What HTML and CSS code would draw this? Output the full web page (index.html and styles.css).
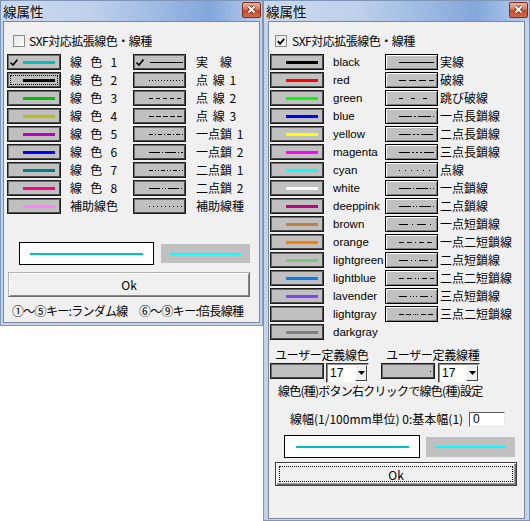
FILE: index.html
```html
<!DOCTYPE html>
<html lang="ja">
<head>
<meta charset="utf-8">
<title>線属性</title>
<link rel="stylesheet" href="styles.css">
</head>
<body>

<div class="win win-left">
  <div class="titlebar">
    <span class="title">線属性</span>
    <span class="close"><svg width="19" height="16" viewBox="0 0 19 16"><path d="M6.5 4.5 L12.5 10.5 M12.5 4.5 L6.5 10.5" class="x-out"/><path d="M6.5 4.5 L12.5 10.5 M12.5 4.5 L6.5 10.5" class="x-in"/></svg></span>
  </div>
  <div class="client">
    <div class="chkrow"><span class="chk"></span><span class="chktext">SXF対応拡張線色・線種</span></div>

    <div class="grid gl">
      <div class="cbtn"><svg class="tick" width="8" height="7" viewBox="0 0 8 7"><path d="M0.5 3.5 L3 6 L7.5 0.5"/></svg><span class="sw" style="background:#00c0c0"></span></div>
      <div class="lab">線 色 1</div>
      <div class="lbtn"><svg class="tick" width="8" height="7" viewBox="0 0 8 7"><path d="M0.5 3.5 L3 6 L7.5 0.5"/></svg><svg class="ln" width="33" height="3"><line x1="0" y1="1.5" x2="33" y2="1.5"/></svg></div>
      <div class="lab2">実　線</div>

      <div class="cbtn focus"><span class="sw" style="background:#000000"></span></div>
      <div class="lab">線 色 2</div>
      <div class="lbtn"><svg class="ln" width="34" height="3"><line x1="0" y1="1.5" x2="34" y2="1.5" stroke-dasharray="1 2"/></svg></div>
      <div class="lab2">点 線 1</div>

      <div class="cbtn"><span class="sw" style="background:#00c000"></span></div>
      <div class="lab">線 色 3</div>
      <div class="lbtn"><svg class="ln" width="34" height="3"><line x1="0" y1="1.5" x2="34" y2="1.5" stroke-dasharray="4 3"/></svg></div>
      <div class="lab2">点 線 2</div>

      <div class="cbtn"><span class="sw" style="background:#c0c000"></span></div>
      <div class="lab">線 色 4</div>
      <div class="lbtn"><svg class="ln" width="34" height="3"><line x1="0" y1="1.5" x2="34" y2="1.5" stroke-dasharray="5 2"/></svg></div>
      <div class="lab2">点 線 3</div>

      <div class="cbtn"><span class="sw" style="background:#c000c0"></span></div>
      <div class="lab">線 色 5</div>
      <div class="lbtn"><svg class="ln" width="34" height="3"><line x1="0" y1="1.5" x2="34" y2="1.5" stroke-dasharray="4 2 1 2"/></svg></div>
      <div class="lab2">一点鎖 1</div>

      <div class="cbtn"><span class="sw" style="background:#0000ff"></span></div>
      <div class="lab">線 色 6</div>
      <div class="lbtn"><svg class="ln" width="34" height="3"><line x1="0" y1="1.5" x2="34" y2="1.5" stroke-dasharray="11 2 1 2"/></svg></div>
      <div class="lab2">一点鎖 2</div>

      <div class="cbtn"><span class="sw" style="background:#008080"></span></div>
      <div class="lab">線 色 7</div>
      <div class="lbtn"><svg class="ln" width="34" height="3"><line x1="0" y1="1.5" x2="34" y2="1.5" stroke-dasharray="4 2 1 2 1 2"/></svg></div>
      <div class="lab2">二点鎖 1</div>

      <div class="cbtn"><span class="sw" style="background:#ff0080"></span></div>
      <div class="lab">線 色 8</div>
      <div class="lbtn"><svg class="ln" width="34" height="3"><line x1="0" y1="1.5" x2="34" y2="1.5" stroke-dasharray="11 2 1 2 1 2"/></svg></div>
      <div class="lab2">二点鎖 2</div>

      <div class="cbtn"><span class="sw" style="background:#ff80ff"></span></div>
      <div class="lab">補助線色</div>
      <div class="lbtn"><svg class="ln" width="34" height="3"><line x1="0" y1="1.5" x2="34" y2="1.5" stroke-dasharray="1 3"/></svg></div>
      <div class="lab2">補助線種</div>
    </div>

    <div class="preview pl">
      <div class="pv-white"><span class="pv-line dark"></span></div>
      <div class="pv-gray"><span class="pv-line bright"></span></div>
    </div>

    <div class="ok okl">Ok</div>
    <div class="hint">①～⑤キー:ランダム線　⑥～⑨キー:倍長線種</div>
  </div>
</div>

<div class="win win-right">
  <div class="titlebar">
    <span class="title">線属性</span>
    <span class="close"><svg width="19" height="16" viewBox="0 0 19 16"><path d="M6.5 4.5 L12.5 10.5 M12.5 4.5 L6.5 10.5" class="x-out"/><path d="M6.5 4.5 L12.5 10.5 M12.5 4.5 L6.5 10.5" class="x-in"/></svg></span>
  </div>
  <div class="client">
    <div class="chkrow rchk"><span class="chk"><svg width="11" height="11" viewBox="0 0 11 11"><path d="M2 5 L4.5 8 L9 2.5"/></svg></span><span class="chktext">SXF対応拡張線色・線種</span></div>

    <div class="grid gr">
      <div class="cbtn"><span class="sw" style="background:#000000"></span></div>
      <div class="en">black</div>
      <div class="rbtn"><svg class="ln" width="35" height="3"><line x1="0" y1="1.5" x2="35" y2="1.5"/></svg></div>
      <div class="lab3">実線</div>

      <div class="cbtn"><span class="sw" style="background:#ff0000"></span></div>
      <div class="en">red</div>
      <div class="rbtn"><svg class="ln" width="35" height="3"><line x1="0" y1="1.5" x2="35" y2="1.5" stroke-dasharray="7 3"/></svg></div>
      <div class="lab3">破線</div>

      <div class="cbtn"><span class="sw" style="background:#00ff00"></span></div>
      <div class="en">green</div>
      <div class="rbtn"><svg class="ln" width="35" height="3"><line x1="0" y1="1.5" x2="35" y2="1.5" stroke-dasharray="4 8"/></svg></div>
      <div class="lab3">跳び破線</div>

      <div class="cbtn"><span class="sw" style="background:#0000ff"></span></div>
      <div class="en">blue</div>
      <div class="rbtn"><svg class="ln" width="35" height="3"><line x1="0" y1="1.5" x2="35" y2="1.5" stroke-dasharray="13 2 2 2"/></svg></div>
      <div class="lab3">一点長鎖線</div>

      <div class="cbtn"><span class="sw" style="background:#ffff00"></span></div>
      <div class="en">yellow</div>
      <div class="rbtn"><svg class="ln" width="35" height="3"><line x1="0" y1="1.5" x2="35" y2="1.5" stroke-dasharray="12 2 2 2 2 2"/></svg></div>
      <div class="lab3">二点長鎖線</div>

      <div class="cbtn"><span class="sw" style="background:#ff00ff"></span></div>
      <div class="en">magenta</div>
      <div class="rbtn"><svg class="ln" width="35" height="3"><line x1="0" y1="1.5" x2="35" y2="1.5" stroke-dasharray="11 2 2 2 2 2 2 2"/></svg></div>
      <div class="lab3">三点長鎖線</div>

      <div class="cbtn"><span class="sw" style="background:#00ffff"></span></div>
      <div class="en">cyan</div>
      <div class="rbtn"><svg class="ln" width="35" height="3"><line x1="0" y1="1.5" x2="35" y2="1.5" stroke-dasharray="1 5"/></svg></div>
      <div class="lab3">点線</div>

      <div class="cbtn"><span class="sw" style="background:#ffffff"></span></div>
      <div class="en">white</div>
      <div class="rbtn"><svg class="ln" width="35" height="3"><line x1="0" y1="1.5" x2="35" y2="1.5" stroke-dasharray="12 2 1 2"/></svg></div>
      <div class="lab3">一点鎖線</div>

      <div class="cbtn"><span class="sw" style="background:#c00080"></span></div>
      <div class="en">deeppink</div>
      <div class="rbtn"><svg class="ln" width="35" height="3"><line x1="0" y1="1.5" x2="35" y2="1.5" stroke-dasharray="12 2 1 2 1 2"/></svg></div>
      <div class="lab3">二点鎖線</div>

      <div class="cbtn"><span class="sw" style="background:#c08040"></span></div>
      <div class="en">brown</div>
      <div class="rbtn"><svg class="ln" width="35" height="3"><line x1="0" y1="1.5" x2="35" y2="1.5" stroke-dasharray="9 4 1 4"/></svg></div>
      <div class="lab3">一点短鎖線</div>

      <div class="cbtn"><span class="sw" style="background:#ff8000"></span></div>
      <div class="en">orange</div>
      <div class="rbtn"><svg class="ln" width="35" height="3"><line x1="0" y1="1.5" x2="35" y2="1.5" stroke-dasharray="5 3 5 3 1 3"/></svg></div>
      <div class="lab3">一点二短鎖線</div>

      <div class="cbtn"><span class="sw" style="background:#80c080"></span></div>
      <div class="en">lightgreen</div>
      <div class="rbtn"><svg class="ln" width="35" height="3"><line x1="0" y1="1.5" x2="35" y2="1.5" stroke-dasharray="9 3 1 3 1 3"/></svg></div>
      <div class="lab3">二点短鎖線</div>

      <div class="cbtn"><span class="sw" style="background:#0080ff"></span></div>
      <div class="en">lightblue</div>
      <div class="rbtn"><svg class="ln" width="35" height="3"><line x1="0" y1="1.5" x2="35" y2="1.5" stroke-dasharray="5 3 5 3 1 2 1 3"/></svg></div>
      <div class="lab3">二点二短鎖線</div>

      <div class="cbtn"><span class="sw" style="background:#8040ff"></span></div>
      <div class="en">lavender</div>
      <div class="rbtn"><svg class="ln" width="35" height="3"><line x1="0" y1="1.5" x2="35" y2="1.5" stroke-dasharray="8 3 1 2 1 2 1 3"/></svg></div>
      <div class="lab3">三点短鎖線</div>

      <div class="cbtn"><span class="sw" style="background:#c0c0c0"></span></div>
      <div class="en">lightgray</div>
      <div class="rbtn"><svg class="ln" width="35" height="3"><line x1="0" y1="1.5" x2="35" y2="1.5" stroke-dasharray="5 2 5 2 1 1 1 1 1 3"/></svg></div>
      <div class="lab3">三点二短鎖線</div>

      <div class="cbtn"><span class="sw" style="background:#808080"></span></div>
      <div class="en">darkgray</div>
    </div>

    <div class="udef">
      <div class="ugroup">
        <div class="ulabel">ユーザー定義線色</div>
        <div class="urow">
          <div class="cbtn ubox"></div>
          <div class="combo c1"><span class="cval">17</span><span class="arrow"><svg width="7" height="4" viewBox="0 0 7 4"><path d="M0 0 H7 L3.5 4 Z"/></svg></span></div>
        </div>
      </div>
      <div class="ugroup">
        <div class="ulabel">ユーザー定義線種</div>
        <div class="urow">
          <div class="cbtn ubox dot"><span class="udot"></span></div>
          <div class="combo c2"><span class="cval">17</span><span class="arrow"><svg width="7" height="4" viewBox="0 0 7 4"><path d="M0 0 H7 L3.5 4 Z"/></svg></span></div>
        </div>
      </div>
    </div>

    <div class="note">線色(種)ボタン右クリックで線色(種)設定</div>

    <div class="widthrow">
      <span class="wlabel">線幅(1/100mm単位) 0:基本幅(1)</span>
      <span class="inp">0</span>
    </div>

    <div class="preview pr">
      <div class="pv-white"><span class="pv-line dark"></span></div>
      <div class="pv-gray"><span class="pv-line bright"></span></div>
    </div>

    <div class="ok okr">Ok</div>
  </div>
</div>

</body>
</html>
```

FILE: styles.css
```css
* { box-sizing: border-box; }
html, body { margin: 0; padding: 0; }
body {
  width: 530px;
  height: 521px;
  overflow: hidden;
  position: relative;
  background: #ffffff;
  font-family: "Noto Sans CJK JP", sans-serif;
  font-size: 12px;
  color: #000;
}

/* windows on the desktop */
.win {
  position: absolute;
  top: 0;
  display: flex;
  flex-direction: column;
  background: #c2d4ec;
  border: 1px solid #7f96b8;
}
.win-left { left: 0; width: 263px; height: 326px; padding: 0 2px 2px; }
.win-right { left: 263px; width: 267px; height: 521px; padding: 0 4px 1px; }

.titlebar {
  height: 20px;
  margin: 0 -2px;
  display: flex;
  justify-content: space-between;
  align-items: flex-start;
  padding: 1px 1px 0 2px;
  background: linear-gradient(90deg, #c8d8ee 0%, #bed0eb 35%, #9bb8e2 62%, #84a6da 80%, #a4bee6 92%, #b9cdeb 100%);
}
.win-right .titlebar { margin: 0 -4px; }
.title {
  font-size: 13.5px;
  line-height: 18px;
  color: #000;
  text-shadow: 0 0 3px rgba(255,255,255,0.8);
}
.close {
  width: 19px;
  height: 16px;
  border: 1px solid #7a2c1e;
  border-radius: 2px;
  background: linear-gradient(180deg, #eab2a0 0%, #d98366 40%, #c54b2b 55%, #d36a4d 100%);
  display: flex;
}
.close svg { display: block; margin: -1px; }
.x-out { stroke: #5e2012; stroke-width: 3.6; fill: none; }
.x-in { stroke: #ffffff; stroke-width: 2; fill: none; }

.client {
  flex: 1;
  background: #f0f0f0;
  border: 1px solid #7d8894;
  display: flex;
  flex-direction: column;
  align-items: flex-start;
}

/* checkbox row */
.chkrow {
  display: flex;
  align-items: center;
  gap: 4px;
  margin: 13px 0 0 9px;
  height: 12px;
}
.rchk { margin-left: 6px; gap: 5px; }
.chk {
  width: 12px;
  height: 12px;
  border: 1px solid #8a8a8a;
  background: linear-gradient(135deg, #e4e4e4, #ffffff);
  display: flex;
  align-items: center;
  justify-content: center;
}
.chk svg path { fill: none; stroke: #000; stroke-width: 2; }
.chktext { line-height: 14px; letter-spacing: -0.5px; }

/* button grids */
.grid {
  display: grid;
  grid-auto-rows: 16px;
  row-gap: 2px;
  margin-top: 7px;
  align-items: center;
}
.gl { margin-left: 3px; grid-template-columns: 54px 72px 53px auto; }
.gr { margin-left: 1px; grid-template-columns: 54px 61px 53px auto; }

.cbtn, .lbtn {
  height: 16px;
  background: #c0c0c0;
  border: 1px solid #1c1c1c;
  box-shadow: inset 1px 1px 0 #6c6c6c, inset -1px -1px 0 #4a4a4a;
  display: flex;
  align-items: center;
  justify-content: flex-end;
  position: relative;
}
.cbtn { padding-right: 5px; }
.lbtn { padding-right: 2px; }
.rbtn {
  height: 16px;
  background: #c0c0c0;
  border: 1px solid #000;
  box-shadow: inset 1px 1px 0 #ffffff, inset -1px -1px 0 #808080;
  display: flex;
  align-items: center;
  justify-content: flex-end;
  padding-right: 3px;
}
.sw { width: 32px; height: 3px; display: block; }
.tick { margin-right: auto; margin-left: 2px; display: block; }
.tick path { fill: none; stroke: #000; stroke-width: 1.6; }
.ln { display: block; }
.ln line { stroke: #000; stroke-width: 1; shape-rendering: crispEdges; }

.focus::after {
  content: "";
  position: absolute;
  left: 2px; top: 2px; right: 2px; bottom: 2px;
  border: 1px dotted #000;
}

.lab { padding-left: 9px; line-height: 16px; word-spacing: 5.5px; white-space: nowrap; }
.lab2 { padding-left: 10px; line-height: 16px; word-spacing: 2px; white-space: nowrap; }
.lab3 { padding-left: 2px; line-height: 16px; white-space: nowrap; }
.en {
  padding-left: 9px;
  line-height: 16px;
  font-family: "Liberation Sans", sans-serif;
  font-size: 11.5px;
  white-space: nowrap;
}

/* preview */
.preview { display: flex; align-items: center; }
.pl { margin: 28px 0 0 15px; gap: 7px; }
.pr { margin: 9px 0 0 15px; gap: 6px; }
.pv-white {
  width: 135px;
  height: 23px;
  background: #fff;
  border: 1px solid #000;
  display: flex;
  align-items: center;
  justify-content: center;
}
.pr .pv-white { width: 136px; }
.pv-gray {
  width: 89px;
  height: 19px;
  background: #c0c0c0;
  display: flex;
  align-items: center;
  justify-content: center;
}
.pr .pv-gray { height: 20px; }
.pv-line { display: block; height: 2px; }
.pv-line.dark { width: 113px; background: #00c0c0; }
.pv-line.bright { width: 71px; background: #00ffff; }

/* ok buttons */
.ok {
  width: 242px;
  display: flex;
  align-items: center;
  justify-content: center;
  background: #f0f0f0;
  position: relative;
  font-family: "Noto Sans CJK JP", sans-serif;
  font-size: 12px;
}
.okl {
  height: 25px;
  margin: 7px 0 0 4px;
  border: 1px solid;
  border-color: #b4b4b4 #696969 #696969 #b4b4b4;
  box-shadow: inset 1px 1px 0 #ffffff, inset -1px -1px 0 #8a8a8a;
}
.okr {
  height: 24px;
  margin: 4px 0 0 6px;
  border: 1px solid #404040;
  box-shadow: inset 1px 1px 0 #ffffff, inset -1px -1px 0 #696969, inset -2px -2px 0 #a0a0a0;
}
.okr::after {
  content: "";
  position: absolute;
  left: 3px; top: 3px; right: 3px; bottom: 3px;
  border: 1px dotted #000;
}

.hint {
  margin: 7px 0 0 8px;
  line-height: 14px;
  letter-spacing: -0.7px;
  white-space: nowrap;
}

/* user defined */
.udef {
  display: grid;
  grid-template-columns: 111px auto;
  margin: 8px 0 0 1px;
}
.ulabel {
  padding-left: 5px;
  line-height: 14px;
  height: 15px;
  white-space: nowrap;
  letter-spacing: -0.3px;
}
.urow { display: flex; align-items: flex-start; gap: 2px; }
.ugroup:nth-child(2) .urow { gap: 3px; }
.ubox { width: 54px; height: 16px; padding-right: 3px; }
.udot { display: block; width: 1px; height: 1px; background: #000; }
.combo {
  height: 20px;
  background: #fff;
  border: 1px solid;
  border-color: #3c3c3c #f4f4f4 #f4f4f4 #3c3c3c;
  box-shadow: inset 1px 1px 0 #8a8a8a;
  display: flex;
  align-items: center;
  justify-content: space-between;
  padding: 1px 1px 1px 3px;
}
.c1 { width: 43px; }
.c2 { width: 42px; }
.cval { font-family: "Liberation Sans", sans-serif; font-size: 12px; line-height: 14px; }
.arrow {
  width: 12px;
  height: 16px;
  background: #f0f0f0;
  border: 1px solid;
  border-color: #ffffff #404040 #404040 #ffffff;
  display: flex;
  align-items: center;
  justify-content: center;
}
.arrow svg { display: block; }
.arrow path { fill: #000; }

.note {
  margin: 1px 0 0 9px;
  line-height: 14px;
  letter-spacing: -0.75px;
  white-space: nowrap;
}
.widthrow {
  display: flex;
  align-items: center;
  margin: 14px 0 0 21px;
  height: 14px;
}
.wlabel { width: 179px; line-height: 14px; white-space: nowrap; }
.inp {
  width: 36px;
  height: 15px;
  background: #fff;
  border: 1px solid;
  border-color: #5a5a5a #e8e8e8 #e8e8e8 #5a5a5a;
  padding-left: 3px;
  font-family: "Liberation Sans", sans-serif;
  font-size: 12px;
  line-height: 13px;
}
```
